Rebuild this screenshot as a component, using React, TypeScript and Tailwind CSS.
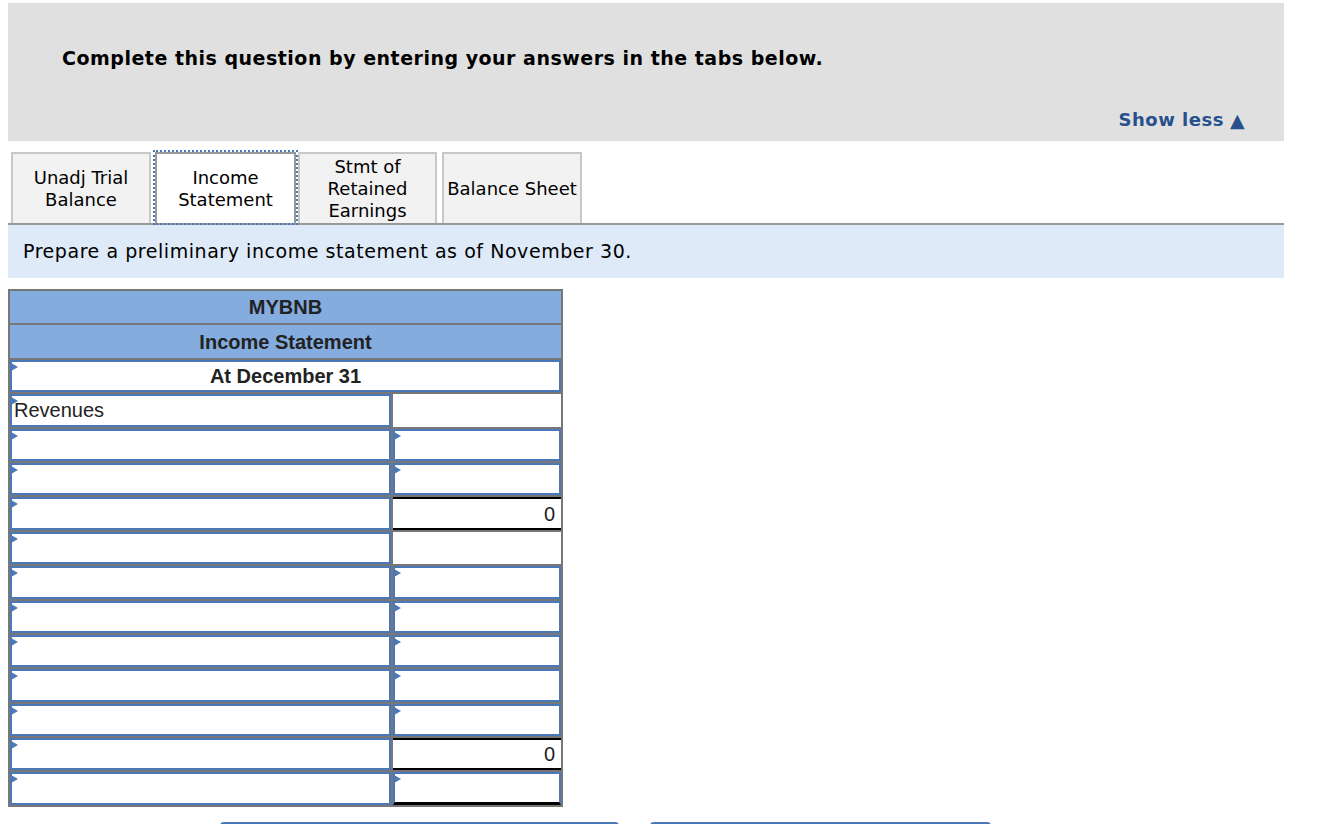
import React from 'react';

function Tri() {
  return (
    <svg className="absolute left-[-1px] top-[0px]" width="8" height="10" viewBox="0 0 8 10">
      <polygon points="0,1 7,5 0,9" fill="#4a78b8" />
    </svg>
  );
}

function InputCell({ children, className = '' }: { children?: React.ReactNode; className?: string }) {
  return (
    <div className={`relative bg-white border-2 border-[#4a78b8] h-full flex items-center ${className}`}>
      <Tri />
      {children}
    </div>
  );
}

type Right = 'input' | 'plain' | 'zero' | 'inputEnd';

const rows: { left: string; right: Right }[] = [
  { left: 'Revenues', right: 'plain' },
  { left: '', right: 'input' },
  { left: '', right: 'input' },
  { left: '', right: 'zero' },
  { left: '', right: 'plain' },
  { left: '', right: 'input' },
  { left: '', right: 'input' },
  { left: '', right: 'input' },
  { left: '', right: 'input' },
  { left: '', right: 'input' },
  { left: '', right: 'zero' },
  { left: '', right: 'inputEnd' },
];

function RightCell({ kind }: { kind: Right }) {
  if (kind === 'input') return <InputCell />;
  if (kind === 'inputEnd')
    return (
      <div className="relative h-full bg-white border-2 border-[#4a78b8] border-b-[3px] border-b-black">
        <Tri />
      </div>
    );
  if (kind === 'zero')
    return (
      <div className="h-full bg-white border-y-2 border-black flex items-center justify-end pr-[6px] text-[20px] text-[#222]">
        0
      </div>
    );
  return <div className="h-full bg-white" />;
}

export default function App() {
  return (
    <div className="bg-white min-h-screen font-['DejaVu_Sans',sans-serif] text-black">
      <div className="pt-[3px] pl-[8px] w-[1284px]">
        {/* gray header */}
        <div className="bg-[#e0e0e0] h-[138px] flex flex-col justify-between">
          <div className="pt-[44px] pl-[54px] text-[19px] leading-[22px] font-bold tracking-[0.5px]">
            Complete this question by entering your answers in the tabs below.
          </div>
          <div className="flex items-center justify-end pr-[39px] pb-[10px] text-[18px] leading-[22px] font-bold text-[#27508c] tracking-[0.5px]">
            <span>Show less</span>
            <span className="ml-[6px] text-[19px] leading-[22px]">▲</span>
          </div>
        </div>

        {/* tabs */}
        <div className="flex pl-[3px] pt-[11px] border-b-2 border-[#999] text-[18px] leading-[22px]">
          <div className="w-[140px] h-[71px] bg-[#f2f2f2] border-2 border-b-0 border-[#c8c8c8] flex items-center justify-center text-center">
            Unadj Trial
            <br />
            Balance
          </div>
          <div className="ml-[4px] w-[141px] h-[71px] bg-white border-2 border-b-0 border-[#999] outline-2 outline-dotted outline-[#4a78b8] flex items-center justify-center text-center">
            Income
            <br />
            Statement
          </div>
          <div className="ml-[2px] w-[139px] h-[71px] bg-[#f2f2f2] border-2 border-b-0 border-[#c8c8c8] flex items-center justify-center text-center">
            Stmt of
            <br />
            Retained
            <br />
            Earnings
          </div>
          <div className="ml-[5px] w-[140px] h-[71px] bg-[#f2f2f2] border-2 border-b-0 border-[#c8c8c8] flex items-center justify-center text-center">
            Balance Sheet
          </div>
        </div>

        {/* instruction */}
        <div className="bg-[#deeaf7] h-[53px] flex items-center pl-[15px] text-[19px] tracking-[0.55px]">
          Prepare a preliminary income statement as of November 30.
        </div>

        {/* table */}
        <div className="mt-[11px] w-[555px] bg-[#777] p-[2px] grid grid-cols-[381px_168px] gap-[2px] auto-rows-[32.4px] font-['Liberation_Sans',Arial,sans-serif] text-[20px] text-[#222]">
          <div className="col-span-2 bg-[#84acdf] flex items-center justify-center font-bold">MYBNB</div>
          <div className="col-span-2 bg-[#84acdf] flex items-center justify-center font-bold">Income Statement</div>
          <div className="col-span-2">
            <InputCell className="justify-center font-bold">At December 31</InputCell>
          </div>
          {rows.map((r, i) => (
            <React.Fragment key={i}>
              <div>
                <InputCell className="pl-[2px]">{r.left}</InputCell>
              </div>
              <div>
                <RightCell kind={r.right} />
              </div>
            </React.Fragment>
          ))}
        </div>

        {/* bottom buttons (cut off) */}
        <div className="flex mt-[15px] pl-[212px] gap-[31px]">
          <div className="w-[399px] h-[20px] border-2 border-[#4a78b8] rounded-t-[4px]" />
          <div className="w-[341px] h-[20px] border-2 border-[#4a78b8] rounded-t-[4px]" />
        </div>
      </div>
    </div>
  );
}
